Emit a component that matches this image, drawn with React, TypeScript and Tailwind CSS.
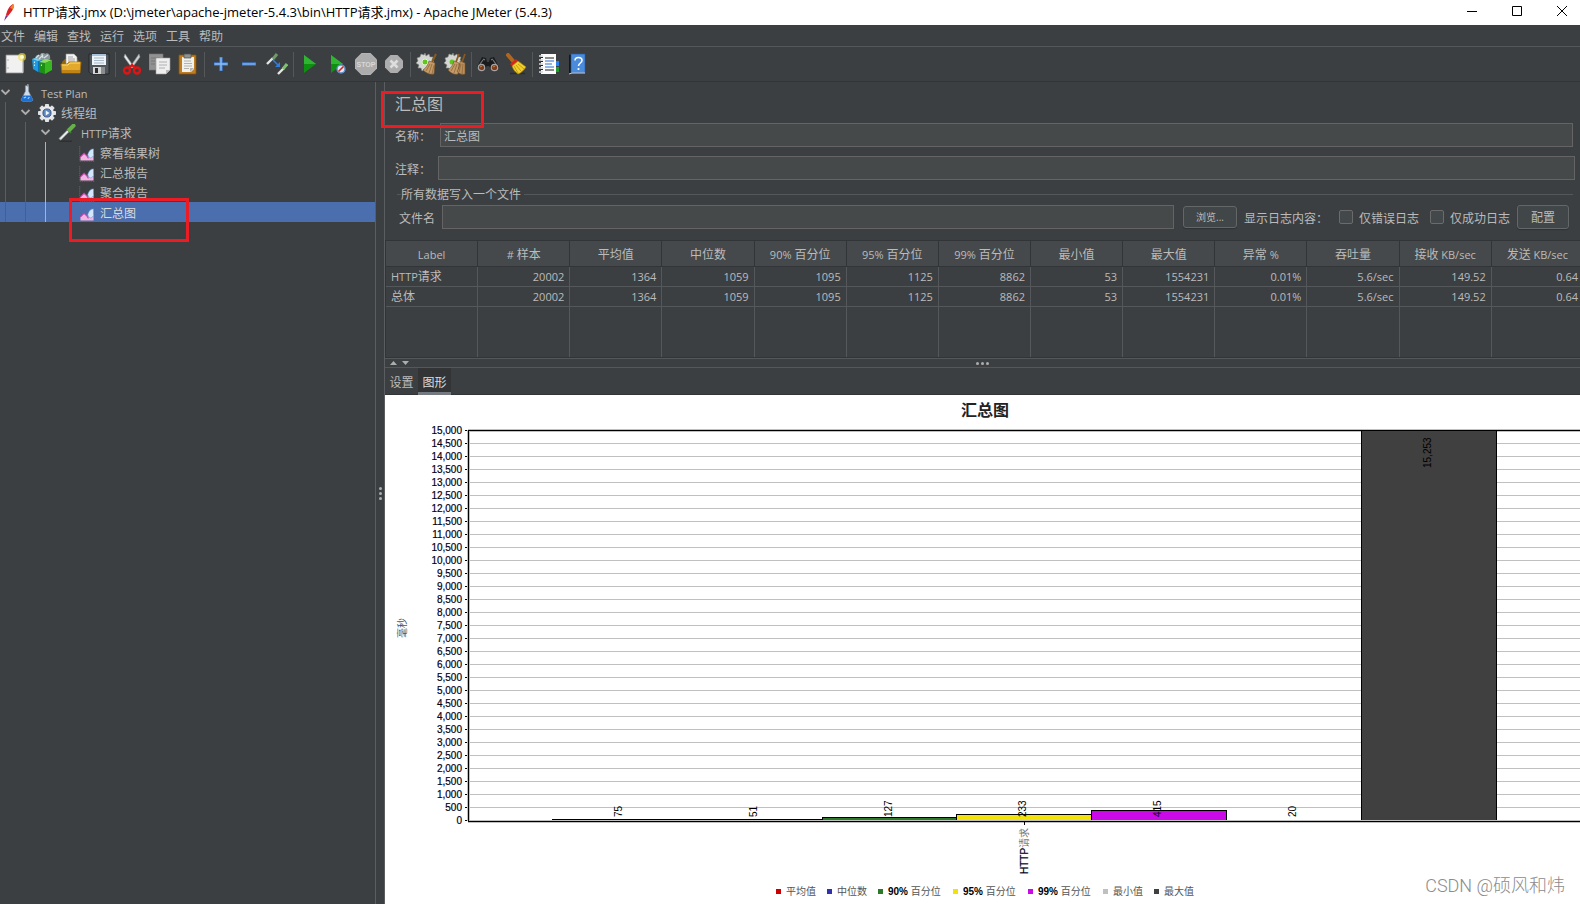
import {ReactNode, useState} from "react";

const menus = ["文件", "编辑", "查找", "运行", "选项", "工具", "帮助"];

const columns = ["Label", "# 样本", "平均值", "中位数", "90% 百分位", "95% 百分位", "99% 百分位", "最小值", "最大值", "异常 %", "吞吐量", "接收 KB/sec", "发送 KB/sec"];

const rows = [
  ["HTTP请求", "20002", "1364", "1059", "1095", "1125", "8862", "53", "1554231", "0.01%", "5.6/sec", "149.52", "0.64"],
  ["总体", "20002", "1364", "1059", "1095", "1125", "8862", "53", "1554231", "0.01%", "5.6/sec", "149.52", "0.64"],
];

const series = [
  {name: "平均值", value: 75, color: "#cc0000", legendX: 391},
  {name: "中位数", value: 51, color: "#3030b0", legendX: 442},
  {name: "百分位", prefix: "90%", value: 127, color: "#2a7a2a", legendX: 493},
  {name: "百分位", prefix: "95%", value: 233, color: "#f2e20a", legendX: 568},
  {name: "百分位", prefix: "99%", value: 415, color: "#ca0ae8", legendX: 643},
  {name: "最小值", value: 20, color: "#c0c0c0", legendX: 718},
  {name: "最大值", value: 15253, color: "#404040", legendX: 769},
];

// Latin runs are set one size smaller than the Chinese ones
const Mixed = ({text}: { text: string }) => (
  <>
    {text.split(/([\u4e00-\u9fff]+)/).filter(Boolean).map((part, i) => (
      /[\u4e00-\u9fff]/.test(part) ? part : <span key={i} className="text-[11px] whitespace-pre">{part}</span>
    ))}
  </>
);

const Svg = ({children, className = "size-[22px]"}: { children: ReactNode, className?: string }) => (
  <svg viewBox="0 0 22 22" className={className} aria-hidden="true">{children}</svg>
);

const NewIcon = () => (
  <Svg>
    <path d="M2 2h17v18H2z" fill="#f1f1f1" stroke="#8d8d8d" strokeWidth=".8"/>
    <path d="M3 19.5h16V8" fill="none" stroke="#c9c9c9"/>
    <path d="M4 6v2M4 14v2" stroke="#b5b5b5"/>
    <circle cx="18" cy="4" r="4" fill="#f6e04c" opacity=".65"/>
    <circle cx="18" cy="4" r="2" fill="#fffbd0"/>
  </Svg>
);

const TemplatesIcon = () => (
  <Svg>
    <path d="M3 6c0-4 3-5 5-4 1-3 4-3 5-1 3-2 6 1 5 5l-8 4z" fill="#8a979b"/>
    <path d="M4 5l3-3M7 6l4-4M12 5l4-3M10 1l1 4" stroke="#d7e0e2" strokeWidth="1.2"/>
    <path d="M0 6l6 1v12l-5-3z" fill="#1c9be0"/>
    <path d="M0 6l3-1 7 2-4 1z" fill="#71d3f7"/>
    <path d="M6 8l5-1v13l-5-1z" fill="#0d6fb5"/>
    <path d="M7 9l6 1v11l-6-2z" fill="#1d8f14"/>
    <path d="M13 10l7-3v10l-7 4z" fill="#37b821"/>
    <path d="M7 9l6-3 7 1-7 3z" fill="#8ae05e"/>
    <path d="M2 9l1 .3M2 12l1 .3M9 12l1 .3" stroke="#fff" strokeWidth="1.3"/>
  </Svg>
);

const OpenIcon = () => (
  <Svg>
    <path d="M2 9l3-3h12l3 3v10H2z" fill="#8f6410"/>
    <path d="M6 1h8l3 3v9H6z" fill="#f3f3f3" stroke="#999" strokeWidth=".6"/>
    <path d="M8 4h5M8 6h7M8 8h7" stroke="#9b9b9b" strokeWidth=".9"/>
    <path d="M1 11h6l2-2h12l-1 11H2z" fill="#e3a92c" stroke="#a46f08" strokeWidth=".8"/>
    <path d="M2 12h6l2-2h10" fill="none" stroke="#ffdc7a"/>
    <path d="M2 17h18v3H2z" fill="#c08416"/>
  </Svg>
);

const SaveIcon = () => (
  <Svg>
    <path d="M1 1h20v20H3l-2-2z" fill="#50565b" stroke="#1f2224" strokeWidth=".8"/>
    <path d="M4 1h14v11H4z" fill="#eef3f7"/>
    <path d="M4 1h14v2H4z" fill="#a7c1dd"/>
    <path d="M6 5h10M6 7.500h10M6 10h10" stroke="#9fb1c2" strokeWidth=".9"/>
    <path d="M5 14h12v7H5z" fill="#d6d6d6"/>
    <path d="M7 15h3v5H7z" fill="#2b2d2f"/>
    <path d="M13 14h4v7h-4z" fill="#898d90"/>
  </Svg>
);

const CutIcon = () => (
  <Svg>
    <path d="M4 1l9 13-2 1L3 4z" fill="#e8eaea" stroke="#8a8d8d" strokeWidth=".6"/>
    <path d="M18 1L9 14l2 1 8-11z" fill="#cfd2d2" stroke="#8a8d8d" strokeWidth=".6"/>
    <circle cx="6" cy="17.500" r="3" fill="none" stroke="#dc1515" strokeWidth="2.400"/>
    <circle cx="16" cy="17.500" r="3" fill="none" stroke="#dc1515" strokeWidth="2.400"/>
    <path d="M8 15l3-3 3 3" fill="none" stroke="#dc1515" strokeWidth="2.400"/>
  </Svg>
);

const CopyIcon = () => (
  <Svg>
    <path d="M0 1h14v16H0z" fill="#929292" stroke="#777" strokeWidth=".6"/>
    <path d="M2 5h9M2 8h4M2 11h4" stroke="#777"/>
    <path d="M7 5h14v12l-4 4H7z" fill="#efefef" stroke="#9c9c9c" strokeWidth=".6"/>
    <path d="M10 9h8M10 12h8M10 15h6" stroke="#b0b0b0"/>
    <path d="M21 17h-4v4z" fill="#b9b9b9"/>
  </Svg>
);

const PasteIcon = () => (
  <Svg>
    <path d="M2 2h17v19H2z" fill="#bf7d22" stroke="#83500c" strokeWidth=".8"/>
    <path d="M5 4h12v12l-3 3H5z" fill="#f1f1ed"/>
    <path d="M7 8h7M7 10.500h8M7 13h8M7 15.500h5" stroke="#aaa" strokeWidth=".9"/>
    <path d="M17 15h-4v4z" fill="#b5b5b5"/>
    <path d="M7 1h7v4H7z" fill="#8e9391" stroke="#4d504f" strokeWidth=".7"/>
  </Svg>
);

const PlusIcon = () => (
  <Svg><path d="M4 11h14M11 4v14" stroke="#3a77c9" strokeWidth="3.400"/><path d="M4.500 11h13M11 4.500v13" stroke="#8fbdf3" strokeWidth="1.400"/></Svg>
);

const MinusIcon = () => (
  <Svg><path d="M4 11h14" stroke="#3a77c9" strokeWidth="3.400"/><path d="M4.500 11h13" stroke="#8fbdf3" strokeWidth="1.200"/></Svg>
);

const ToggleIcon = () => (
  <Svg>
    <path d="M1 11l6-6" stroke="#e2e6e4" strokeWidth="2.400"/>
    <path d="M7 6l4-5" stroke="#6f9a68" strokeWidth="3"/>
    <path d="M12 21l6-6" stroke="#e2e6e4" strokeWidth="2.400"/>
    <path d="M17 16l4-5" stroke="#7fbf70" strokeWidth="3"/>
    <path d="M7 7l5 5" stroke="#2f7de0" strokeWidth="1.500"/>
    <path d="M14 9v5H9z" fill="#2f7de0"/>
  </Svg>
);

const StartIcon = () => (
  <Svg>
    <path d="M5 2l12 9-12 9z" fill="#0f8f12"/>
    <path d="M5 2l12 9H5z" fill="#2fb532"/>
  </Svg>
);

const StartNoPauseIcon = () => (
  <Svg>
    <path d="M4 2l12 9-12 9z" fill="#0f8f12"/>
    <path d="M4 2l12 9H4z" fill="#2fb532"/>
    <circle cx="14" cy="16" r="4" fill="#dfe9f5" stroke="#5e8fcb" strokeWidth="1.400"/>
    <path d="M11.500 18.500l5-5" stroke="#d92020" strokeWidth="1.600"/>
  </Svg>
);

const StopIcon = () => (
  <Svg>
    <path d="M6.500 0h9L22 6.500v9L15.500 22h-9L0 15.500v-9z" fill="#b4b4b4"/>
    <path d="M6.900 1h8.200L21 6.900v8.200L15.100 21H6.900L1 15.100V6.900z" fill="#acacac"/>
    <text x="11" y="14" textAnchor="middle" fontSize="7" fontWeight="700" fill="#d8d8d8"
          fontFamily="Liberation Sans, sans-serif">STOP</text>
  </Svg>
);

const ShutdownIcon = () => (
  <Svg>
    <path d="M7.500 2h7L20 7.500v7L14.500 20h-7L2 14.500v-7z" fill="#adadad"/>
    <path d="M7.500 7.500l7 7M14.500 7.500l-7 7" stroke="#dedede" strokeWidth="2.600"/>
  </Svg>
);

const gearTeeth = "M9 0l1 3 3-2 1 3 3 0-1 3 2 2-3 2 1 3-3 0-1 3-3-1-3 2-1-3-3 0 1-3-3-2 2-2-1-3 3-1 1-3 3 1z";

const ClearIcon = () => (
  <Svg>
    <path d={gearTeeth} fill="#d3d6d2" stroke="#868a86" strokeWidth=".6"/>
    <circle cx="9" cy="9" r="3" fill="#62c421" stroke="#dff5cc"/>
    <path d="M20 1l-4 8" stroke="#8a5a20" strokeWidth="2"/>
    <path d="M13 8l6 2-1 11c-4 1-8-1-11-4 3-2 5-5 6-9z" fill="#c39a68" stroke="#7a5225" strokeWidth=".6"/>
    <path d="M14 11l-4 7M16 11l-3 9M18 12l-2 9" stroke="#8d6234" strokeWidth=".7"/>
  </Svg>
);

const ClearAllIcon = () => (
  <Svg>
    <path d={gearTeeth} fill="#d3d6d2" stroke="#868a86" strokeWidth=".6"/>
    <circle cx="8" cy="9" r="2.500" fill="#62c421"/>
    <path d="M15 1l-3 8M21 1l-3 8" stroke="#8a5a20" strokeWidth="1.800"/>
    <path d="M10 8l5 2-1 11c-4 1-7-1-10-4 3-2 5-5 6-9z" fill="#c39a68" stroke="#7a5225" strokeWidth=".6"/>
    <path d="M16 8l5 2v11c-3 1-6 0-8-3 2-2 3-6 3-10z" fill="#b98f5c" stroke="#7a5225" strokeWidth=".6"/>
    <path d="M11 11l-4 7M13 11l-3 9M17 11l-2 8M19 11l-1 10" stroke="#8d6234" strokeWidth=".7"/>
  </Svg>
);

const SearchIcon = () => (
  <Svg>
    <path d="M5 4l4 1 1 4h2l1-4 4-1 5 10-6 4-4-5h-2l-4 5-6-4z" fill="#1a1b1c"/>
    <path d="M6 6l2 1M16 6l-2 1M3 11l3-4M19 11l-3-4" stroke="#777b7e" strokeWidth="1.200"/>
    <circle cx="4.500" cy="14.500" r="3.200" fill="#7c3d1d" stroke="#a5a5a5" strokeWidth="1.200"/>
    <circle cx="17.500" cy="14.500" r="3.200" fill="#7c3d1d" stroke="#a5a5a5" strokeWidth="1.200"/>
    <path d="M3 14l2-1M16 14l2-1" stroke="#c98254"/>
  </Svg>
);

const SearchResetIcon = () => (
  <Svg>
    <path d="M5 20.500h15" stroke="#2a2c2d" strokeWidth="1.500"/>
    <path d="M3 2l5 6" stroke="#b0661c" strokeWidth="4" strokeLinecap="round"/>
    <path d="M5 11l6-5 2 2-6 5z" fill="#d3261b"/>
    <path d="M7 13l6-5 8 6c-2 3-5 6-8 7-3-2-5-5-6-8z" fill="#f3cf2c" stroke="#a8830b" strokeWidth=".7"/>
    <path d="M9 13l4 7M11 12l5 6M13 11l6 5" stroke="#b98f0c" strokeWidth=".8"/>
  </Svg>
);

const FunctionIcon = () => (
  <Svg>
    <path d="M17 8h4v5h-4z" fill="#2d7ff0"/>
    <path d="M17 14h4v5h-4z" fill="#1f9a28"/>
    <path d="M3 1h15v20H3z" fill="#fbfbfb"/>
    <path d="M7 5h9M7 17h9" stroke="#1c1c1c" strokeWidth="1.200"/>
    <path d="M7 8h9M7 11h7M7 14h9" stroke="#2d6fd0" strokeWidth="1.200"/>
    <path d="M1 3h4M1 7h4M1 11h4M1 15h4M1 19h4" stroke="#d8d8d8" strokeWidth="1.500"/>
    <path d="M3 4.500h2M3 8.500h2M3 12.500h2M3 16.500h2" stroke="#222"/>
  </Svg>
);

const HelpIcon = () => (
  <Svg>
    <path d="M3 2l3-1v19l-3 1z" fill="#15181b"/>
    <path d="M5 1h14v19H5z" fill="#4a8bdc" stroke="#245c9f" strokeWidth=".6"/>
    <path d="M3 21l3-1h13" fill="none" stroke="#c6ccd2"/>
    <path d="M9 7.500c0-4 7-4 7 0 0 2.500-3.500 2.500-3.500 5.500" fill="none" stroke="#fff" strokeWidth="1.500"/>
    <circle cx="12.500" cy="16" r="1.100" fill="#fff"/>
  </Svg>
);

const toolbar = [
  [["新建", NewIcon], ["模板", TemplatesIcon], ["打开", OpenIcon], ["保存", SaveIcon]],
  [["剪切", CutIcon], ["复制", CopyIcon], ["粘贴", PasteIcon]],
  [["展开", PlusIcon], ["收起", MinusIcon], ["切换", ToggleIcon]],
  [["启动", StartIcon], ["不停顿启动", StartNoPauseIcon], ["停止", StopIcon], ["关闭", ShutdownIcon]],
  [["清除", ClearIcon], ["清除全部", ClearAllIcon]],
  [["搜索", SearchIcon], ["重置搜索", SearchResetIcon]],
  [["函数助手", FunctionIcon], ["帮助", HelpIcon]],
] as [string, () => ReactNode][][];

const FlaskIcon = () => (
  <Svg className="size-[18px]">
    <path d="M9 2h4v7l5 10c0 2-1 2-2 2H6c-1 0-2 0-2-2L9 9z" fill="#cfdcea" stroke="#7b8a99" strokeWidth=".7"/>
    <path d="M6 14h10l2 5c0 2-1 2-2 2H6c-1 0-2 0-2-2z" fill="#1c70d2"/>
    <path d="M7 17l3-1M12 18l2-2" stroke="#9ccbff" strokeWidth="1.400"/>
    <path d="M12 0v3" stroke="#8b9094" strokeWidth="2"/>
  </Svg>
);

const GearIcon = () => (
  <Svg className="size-[18px]">
    {[0, 45, 90, 135].map((a) => (
      <rect key={a} x="8.500" y="0" width="5" height="22" rx="1" fill="#dfe2e5" transform={`rotate(${a} 11 11)`}/>
    ))}
    <circle cx="11" cy="11" r="8.500" fill="#e8eaec"/>
    <circle cx="11" cy="11" r="5" fill="#5f86bd" stroke="#2c4a78"/>
    <path d="M9.500 8l4.500 3-4.500 3z" fill="#f2f7fd"/>
  </Svg>
);

const DropperIcon = () => (
  <Svg className="size-[18px]">
    <path d="M2 21h15" stroke="#2a2c2d" strokeWidth="1.500"/>
    <path d="M2 19l11-11" stroke="#aab0ae" strokeWidth="3.500"/>
    <path d="M3 18L13 8" stroke="#f4f6f5" strokeWidth="1.500"/>
    <path d="M11 6l5 5" stroke="#3c7a2a" strokeWidth="2.400"/>
    <path d="M14 7l5-5" stroke="#67b04b" strokeWidth="5" strokeLinecap="round"/>
  </Svg>
);

const ListenerIcon = () => (
  <Svg className="size-4">
    <path d="M1 0v21h20" fill="none" stroke="#6b6e70" strokeDasharray="2 1"/>
    <path d="M2 20v-5l5-5 4 3 4 2 5-4v9z" fill="#f3b4e4"/>
    <path d="M2 15l5-5 4 4 2 3" fill="none" stroke="#c83ca6" strokeWidth="1.400"/>
    <path d="M12 12c2-6 4-8 8-8v9c-2 3-4 4-5 3-2-1-2-2-3-4z" fill="#d5e8fb" stroke="#5d94d2" strokeWidth=".8"/>
  </Svg>
);

const Chevron = () => (
  <svg viewBox="0 0 10 6" className="h-1.5 w-2.5 shrink-0" aria-hidden="true">
    <path d="M1.500 1l4 4 4-4" fill="none" stroke="#adadad" strokeWidth="1.800"/>
  </svg>
);

const tree = [
  {label: "Test Plan", level: 0, icon: FlaskIcon},
  {label: "线程组", level: 1, icon: GearIcon},
  {label: "HTTP请求", level: 2, icon: DropperIcon},
  {label: "察看结果树", level: 3, icon: ListenerIcon},
  {label: "汇总报告", level: 3, icon: ListenerIcon},
  {label: "聚合报告", level: 3, icon: ListenerIcon},
  {label: "汇总图", level: 3, icon: ListenerIcon},
];

const guides = ["border-[#5b5e60]", "border-[#5b5e60]", "border-[#84bdf0]"];

const windowButton = "flex h-[22px] w-[45px] items-center justify-center";

const TitleBar = () => (
  <header className="flex h-[25px] shrink-0 items-center bg-white text-black">
    <svg viewBox="0 0 12 18" className="ml-[3px] h-[18px] w-3" aria-hidden="true">
      <path d="M10 0c2 2 0 5-1 7l-4 5-2-1c1-4 3-9 7-11z" fill="#d8232a"/>
      <path d="M10 0c2 2 1 3 0 5L7 4z" fill="#f08a24"/>
      <path d="M5 12l-2-1-2 6z" fill="#7a2a86"/>
    </svg>
    <h1 className="ml-2 flex-1 truncate text-[13px]">HTTP请求.jmx (D:\jmeter\apache-jmeter-5.4.3\bin\HTTP请求.jmx) - Apache JMeter (5.4.3)</h1>
    <div className="-mr-1 flex self-start">
      <button type="button" aria-label="最小化" className={windowButton}>
        <svg viewBox="0 0 10 10" className="size-2.5"><path d="M0 5.500h10" stroke="#000"/></svg>
      </button>
      <button type="button" aria-label="最大化" className={windowButton}>
        <svg viewBox="0 0 10 10" className="size-2.5"><path d="M.5.5h9v9h-9z" fill="none" stroke="#000"/></svg>
      </button>
      <button type="button" aria-label="关闭窗口" className={windowButton}>
        <svg viewBox="0 0 10 10" className="size-2.5"><path d="M0 0l10 10M10 0L0 10" stroke="#000"/></svg>
      </button>
    </div>
  </header>
);

const Toolbar = () => (
  <div className="flex h-[35px] shrink-0 items-center border-b border-[#323537] pl-px">
    {toolbar.map((group, i) => (
      <div key={i} className="flex items-center">
        {i > 0 && <span className="mx-[2px] h-[25px] w-px bg-[#555859]"/>}
        {group.map(([name, Icon]) => (
          <button key={name} type="button" aria-label={name} className="flex h-7 w-7 items-center justify-center">
            <Icon/>
          </button>
        ))}
      </div>
    ))}
  </div>
);

const Tree = () => {
  const [selected, setSelected] = useState("汇总图");

  return (
    <nav className="relative w-[376px] shrink-0 border-r border-[#5b5e60]">
      <ul>
        {tree.map(({label, level, icon: Icon}) => (
          <li key={label}
              onClick={() => setSelected(label)}
              className={`flex h-5 items-center ${selected === label ? "bg-[#4b6eaf] text-[#dcdcdc]" : ""}`}>
            {guides.slice(0, level).map((color, i) => (
              <span key={i} className={`ml-[5px] h-5 w-[15px] shrink-0 border-l ${color}`}/>
            ))}
            {level < 3 && <Chevron/>}
            <span className={level < 3 ? "ml-2 flex w-[23px] pt-[2px]" : "ml-[19px] flex w-[21px] pt-[3px]"}><Icon/></span>
            <span className="pt-[3px]"><Mixed text={label}/></span>
          </li>
        ))}
      </ul>
      <div className="pointer-events-none absolute top-[116px] left-[69px] h-11 w-[120px] border-3 border-[#ec1c24]"/>
    </nav>
  );
};

const inputStyle = "h-6 min-w-0 flex-1 border border-[#646464] bg-[#45494a] px-[3px] pt-[2px] outline-none";
const buttonStyle = "rounded-[3px] border border-[#646768] bg-[#414648] pt-[2px] shadow-[0_1px_1px_#2f3133]";
const checkboxStyle = "size-3.5 appearance-none rounded-[2px] border border-[#6b6b6b] bg-[#43494a] checked:bg-[#4b6eaf]";

const LogFilter = ({label}: { label: string }) => (
  <label className="flex items-center gap-1.5">
    <input type="checkbox" className={checkboxStyle}/>
    <span className="pt-[3px]">{label}</span>
  </label>
);

const Settings = () => {
  const [name, setName] = useState("汇总图");

  return (
    <form className="relative h-[158px] shrink-0 pt-[11px]" onSubmit={(e) => e.preventDefault()}>
      <h2 className="ml-[10px] text-base leading-[22px]">汇总图</h2>
      <div className="mt-2 mr-[7px] ml-[10px] flex items-center">
        <label htmlFor="name" className="w-[45px] pt-[3px]">名称：</label>
        <input id="name" type="text" value={name} onChange={(e) => setName(e.target.value)} className={inputStyle}/>
      </div>
      <div className="mt-[9px] mr-[5px] ml-[10px] flex items-center">
        <label htmlFor="comment" className="w-[43px] pt-[3px]">注释：</label>
        <input id="comment" type="text" className={inputStyle}/>
      </div>
      <fieldset className="mt-[5px] mr-[7px] ml-3 border-t border-[#55585a]">
        <legend className="ml-1 pt-[2px] pr-[3px] leading-4">所有数据写入一个文件</legend>
        <div className="mt-[2px] mr-1 flex items-center pl-[2px]">
          <label htmlFor="file" className="w-[43px] pt-[3px]">文件名</label>
          <input id="file" type="text" className={inputStyle}/>
          <button type="button" className={`ml-[9px] h-[22px] w-[54px] text-[10px] ${buttonStyle}`}>浏览...</button>
          <span className="ml-[7px] w-[95px] pt-[3px]">显示日志内容：</span>
          <LogFilter label="仅错误日志"/>
          <span className="w-[11px]"/>
          <LogFilter label="仅成功日志"/>
          <button type="button" className={`ml-[7px] h-6 w-[52px] ${buttonStyle}`}>配置</button>
        </div>
      </fieldset>
      <div className="pointer-events-none absolute top-[9px] -left-1 h-[37px] w-[103px] border-3 border-[#ec1c24]"/>
    </form>
  );
};

const Stats = () => (
  <div className="h-[118px] shrink-0 overflow-hidden border-b border-l border-[#323537]">
    <table className="h-full w-[1198px] min-w-full table-fixed border-separate border-spacing-0">
      <thead>
        <tr className="h-[27px] bg-[#45494b]">
          {columns.map((c) => (
            <th key={c} className="border-y border-r border-[#323537] p-0 pt-[3px] font-normal whitespace-nowrap"><Mixed text={c}/></th>
          ))}
        </tr>
      </thead>
      <tbody>
        {rows.map((row) => (
          <tr key={row[0]} className="h-5">
            {row.map((cell, i) => (
              <td key={i}
                  className={`border-r border-b border-[#55585a] p-0 px-[5px] leading-[19px] ${i > 0 ? "text-right" : ""}`}>
                <Mixed text={cell}/>
              </td>
            ))}
          </tr>
        ))}
        <tr>
          {columns.map((c) => <td key={c} className="border-r border-[#55585a] p-0"/>)}
        </tr>
      </tbody>
    </table>
  </div>
);

// Plot area inside the 1195x509 drawing
const left = 83;
const top = 35;
const bottom = 426;
const ticks = Array.from({length: 31}, (_, i) => i * 500);
const barX = (i: number) => 167 + Math.round(i * 134.8);

const Chart = () => (
  <svg viewBox="0 0 1195 509" className="block w-full bg-white font-['Liberation_Sans','Noto_Sans_CJK_SC',sans-serif] text-[10px]" role="img" aria-label="汇总图">
    <text x="600" y="21" textAnchor="middle" fontSize="16" fontWeight="700" fill="#222">汇总图</text>
    {ticks.map((t) => {
      const y = bottom - 1 - t / 500 * 13 + .5;
      return (
        <g key={t}>
          <path d={`M${left} ${y}H1195`} stroke="#c0c0c0"/>
          <path d={`M${left - 3} ${y}h3`} stroke="#000"/>
          <text x="77" y={y + 3.5} textAnchor="end" fill="#000018" stroke="#000018" strokeWidth=".2">{t.toLocaleString("en-US")}</text>
        </g>
      );
    })}
    <path d={`M${left} ${top - .5}H1195M${left} ${top + 1.5}H1195M${left - .5} ${top}V${bottom}M${left + 1.5} ${top}V${bottom}`} stroke="#c0c0c0"/>
    {series.map(({value, color}, i) => {
      // anything above the top of the axis is cut off there
      const h = Math.min(391, Math.ceil(value / 500 * 13));
      return h > 1 && (
        <rect key={i} x={barX(i) + .5} y={bottom - h + .5} width={barX(i + 1) - barX(i)} height={h - 1} fill={color} stroke="#000"/>
      );
    })}
    <path d={`M${left} ${bottom - .5}H1195M${left} ${bottom + 1.5}H1195`} stroke="#c0c0c0"/>
    <path d={`M${left + .5} ${top}V${bottom + 1}M${left} ${top + .5}H1195M${left} ${bottom + .5}H1195`} fill="none" stroke="#000"/>
    {series.map(({value}, i) => (
      <text key={i} transform={`translate(${barX(i) + 70} ${value > 15000 ? 73 : 422}) rotate(-90)`} fill="#000">
        {value.toLocaleString("en-US")}
      </text>
    ))}
    <path d={`M639.5 ${bottom}v4`} stroke="#000"/>
    <text transform="translate(643 479) rotate(-90)" fill="#000018" stroke="#000018" strokeWidth=".2">HTTP<tspan fill="#777" stroke="none">请求</tspan></text>
    <text transform="translate(21 243) rotate(-90)" fill="#555">毫秒</text>
    {series.map(({name, prefix, color, legendX}, i) => (
      <g key={i}>
        <rect x={legendX} y="494" width="5" height="5" fill={color}/>
        <text x={legendX + 10} y="500" fill="#555">
          {prefix && <tspan fill="#000" fontWeight="700">{prefix} </tspan>}{name}
        </text>
      </g>
    ))}
  </svg>
);

const App = () => {
  const [tab, setTab] = useState("图形");

  return (
    <div className="flex h-screen flex-col overflow-hidden bg-[#3c3f41] font-['Open_Sans','Noto_Sans_CJK_SC',sans-serif] text-xs text-[#bbbbbb]">
      <TitleBar/>
      <div className="flex h-[22px] shrink-0 items-center gap-[9px] border-b border-[#55585a] pt-[2px] pl-px">
        {menus.map((m) => <button key={m} type="button">{m}</button>)}
      </div>
      <Toolbar/>
      <div className="flex min-h-0 flex-1">
        <Tree/>
        <div className="flex w-[9px] shrink-0 flex-col items-center justify-center gap-[2px]">
          {[0, 1, 2].map((i) => <span key={i} className="size-[3px] rounded-full bg-[#adadad]"/>)}
        </div>
        <main className="relative flex min-w-0 flex-1 flex-col shadow-[-1px_0_0_#5b5e60]">
          <Settings/>
          <Stats/>
          <div className="relative flex h-[10px] shrink-0 items-center justify-center gap-[2px] border-y border-[#55585a]">
            <svg viewBox="0 0 22 6" className="absolute top-px left-[5px] h-1.5 w-[22px]" aria-hidden="true">
              <path d="M0 5h7L3.500 1zM12 1h7l-3.500 4z" fill="#adadad"/>
            </svg>
            {[0, 1, 2].map((i) => <span key={i} className="size-[3px] rounded-full bg-[#adadad]"/>)}
          </div>
          <div className="flex h-[27px] shrink-0 border-b border-[#323537]" role="tablist">
            {["设置", "图形"].map((t) => (
              <button key={t} type="button" role="tab" aria-selected={tab === t} onClick={() => setTab(t)}
                      className={tab === t ? "-mb-px w-[33px] border-b-3 border-[#747a80] bg-[#323436] pt-[5px] text-[#dddddd]" : "w-[33px] pt-[3px]"}>
                {t}
              </button>
            ))}
          </div>
          <div className="min-h-0 flex-1 overflow-hidden bg-white"><Chart/></div>
          <p className="absolute right-[15px] bottom-1.5 font-['Roboto','Noto_Sans_CJK_SC',sans-serif] text-lg leading-6 font-light text-[#8c8c8c]">CSDN @硕风和炜</p>
        </main>
      </div>
    </div>
  );
};

export default App;
